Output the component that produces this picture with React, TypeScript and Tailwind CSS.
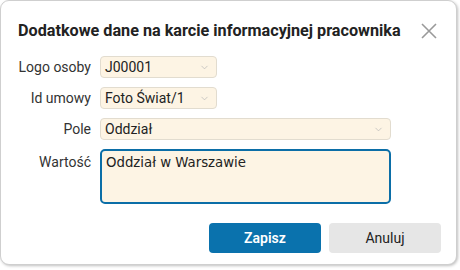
import { ChevronDown } from "lucide-react";

const selects = [
  { label: "Logo osoby", value: "J00001", wide: false },
  { label: "Id umowy", value: "Foto Świat/1", wide: false },
  { label: "Pole", value: "Oddział", wide: true },
];

export default function App() {
  return (
    <div className="h-[270px] w-[460px] bg-white [font-family:Roboto,'Liberation_Sans',sans-serif]">
      <div className="flex h-[265px] w-[457px] flex-col rounded-[9px] border border-[#cfcfcf] bg-white shadow-[1px_1px_3px_rgba(0,0,0,0.25)]">
        <div className="flex items-center justify-between pl-[17px] pr-[19px] pt-[18px]">
          <h1 className="text-[16.2px] font-bold text-[#222]">
            Dodatkowe dane na karcie informacyjnej pracownika
          </h1>
          <svg width="16" height="16" viewBox="0 0 16 16" className="text-[#9a9a9a]">
            <path d="M1 1 L15 15 M15 1 L1 15" stroke="currentColor" strokeWidth="1.6" fill="none" />
          </svg>
        </div>

        <div className="mt-[13px] flex flex-col gap-[9px] pr-[65px]">
          {selects.map((s) => (
            <div key={s.label} className="flex items-center">
              <span className="w-[91px] pr-[1px] text-right text-[14px] text-[#333]">
                {s.label}
              </span>
              <div
                className={
                  "ml-[8px] flex h-[22px] items-center justify-between rounded-[4px] border border-[#e2dccf] bg-[#fdf4e4] pl-[4px] pr-[6px] text-[14px] text-[#222] " +
                  (s.wide ? "flex-1" : "w-[117px]")
                }
              >
                <span>{s.value}</span>
                <ChevronDown className="h-[11px] w-[11px] text-[#b5b5b5]" strokeWidth={1.5} />
              </div>
            </div>
          ))}
          <div className="flex items-start">
            <span className="w-[91px] pr-[1px] pt-[3px] text-right text-[14px] text-[#333]">
              Wartość
            </span>
            <div className="ml-[8px] h-[55px] flex-1 rounded-[5px] border-2 border-[#0b6ea7] bg-[#fdf4e4] px-[4px] pt-[2px] text-[13.3px] text-[#222] [font-family:'DejaVu_Sans',Verdana,sans-serif]">
              Oddział w Warszawie
            </div>
          </div>
        </div>

        <div className="mt-[19px] flex justify-end gap-[8px] pr-[15px]">
          <button className="h-[30px] w-[112px] rounded-[4px] bg-[#0a72ad] text-[14px] font-semibold text-white">
            Zapisz
          </button>
          <button className="h-[30px] w-[112px] rounded-[4px] bg-[#e6e6e6] text-[14px] text-[#222]">
            Anuluj
          </button>
        </div>
      </div>
    </div>
  );
}
